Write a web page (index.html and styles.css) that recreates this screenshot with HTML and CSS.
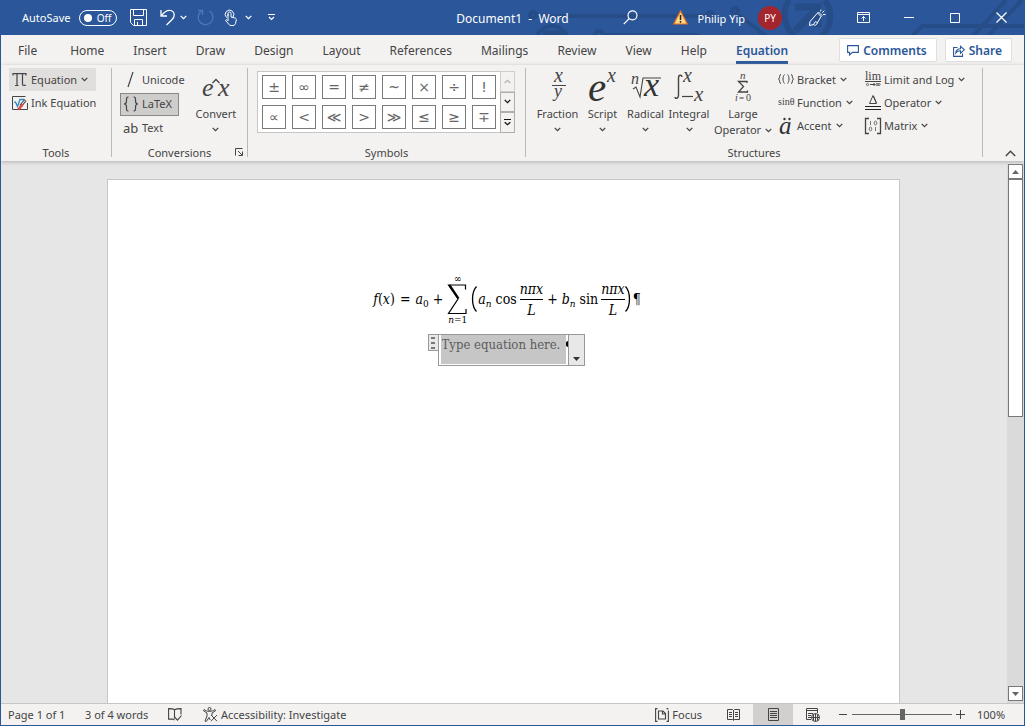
FILE: index.html
```html
<!DOCTYPE html>
<html lang="en">
<head>
<meta charset="utf-8">
<title>Document1 - Word</title>
<link rel="stylesheet" href="styles.css">
</head>
<body>
<svg class="defs" width="0" height="0" aria-hidden="true">
  <symbol id="chev" viewBox="0 0 7 5"><path d="M.7 .9 3.5 3.6 6.3 .9" fill="none" stroke="currentColor" stroke-width="1.3"/></symbol>
</svg>
<div class="window">
  <header class="titlebar">
    <svg class="circuit" width="500" height="35" viewBox="0 0 500 35" fill="none" stroke="#264d88" stroke-width="4" aria-hidden="true">
      <circle cx="9" cy="15" r="3"/><path d="M13 16H181"/><circle cx="186" cy="15" r="3"/>
      <circle cx="28" cy="42" r="16"/><path d="M19 33h18v6" stroke-width="5"/>
      <circle cx="75" cy="35" r="4"/><path d="M80 35H172l8 4"/>
      <circle cx="211" cy="11" r="3"/><path d="M215 15 242 36"/>
      <path d="M265 0a28 28 0 0 0 5 36M301 0a28 28 0 0 1-3 36" stroke-width="6"/>
      <path d="M271 7h23v20M293 9 271 31" stroke-width="7"/>
      <path d="M388 36 398 26H500M449 36 482 0M464 36 498 0"/>
    </svg>
    <div class="quick">
      <label class="autosave"><span>AutoSave</span><input type="checkbox" role="switch" class="hidden-check"><span class="switch"><i></i>Off</span></label>
      <button class="ic q-save" aria-label="Save"><svg width="17" height="17" viewBox="0 0 17 17" fill="none" stroke="#fff"><path d="M.5 .5h16v16H3.500l-3-3zM3.500 .5v6h10v-6M4.500 16.500v-6h8v6M7.500 16v-3"/></svg></button>
      <button class="ic q-undo" aria-label="Undo"><svg width="15" height="17" viewBox="0 0 15 17" fill="none" stroke="#fff" stroke-width="1.300"><path d="M1 1v6h6M1.300 6.700C4 3 7 1.300 9.500 1.300c3 0 4.700 2.200 4.700 4.700 0 2-1 3.500-2.300 4.800L6.500 16"/></svg></button>
      <button class="ic q-chev" aria-label="Undo options"><svg width="7" height="5"><use href="#chev"/></svg></button>
      <button class="ic q-redo" aria-label="Repeat"><svg width="17" height="17" viewBox="0 0 17 17" fill="none" stroke="#4d79b8" stroke-width="1.300"><path d="M12.500 2A7.400 7.400 0 1 1 4 2.500M1 1.500h4.500V6"/></svg></button>
      <button class="ic q-touch" aria-label="Touch mode"><svg width="14" height="17" viewBox="0 0 14 17" fill="none" stroke="#fff"><path d="M2.500 8.500a4.300 4.300 0 1 1 6.500-.5M4 7V4.500a1.500 1.500 0 0 1 3 0V8l4 1c1 .3 1.500 1 1.300 2l-.8 3.500-1.500 2H6L1.500 11.500c1-1.300 2-.7 2.500.3V5"/></svg></button>
      <button class="ic q-chev" aria-label="Touch options"><svg width="7" height="5"><use href="#chev"/></svg></button>
      <button class="ic q-more" aria-label="Customize toolbar"><svg width="7" height="7" viewBox="0 0 7 7" fill="none" stroke="#fff"><path d="M0 .5h7M1 3 3.500 5.500 6 3" stroke-width="1.200"/></svg></button>
    </div>
    <div class="title">Document1&nbsp; -&nbsp; Word</div>
    <div class="account">
      <button class="ic search" aria-label="Search"><svg width="15" height="15" viewBox="0 0 15 15" fill="none" stroke="#fff" stroke-width="1.200"><circle cx="9.500" cy="5.300" r="4.500"/><path d="M6.300 8.500.7 14.200"/></svg></button>
      <svg class="warn" width="15" height="15" viewBox="0 0 15 15"><path d="M7.500 1 14.300 14H.7z" fill="#ffd987" stroke="#e0701a" stroke-width="1.200"/><path d="M7.500 5v5M7.500 11v1.700" stroke="#222" stroke-width="1.500"/></svg>
      <span>Philip Yip</span>
      <span class="avatar">PY</span>
      <button class="ic win" aria-label="Drawing pen"><svg width="18" height="18" viewBox="0 0 18 18" fill="none" stroke="#fff"><path d="M2 12.500 9.500 4 13 7.500l-4.500 8c-1 1-2.500 1-3 0L1.500 16.500zM9.500 4l1-1 3.500 3.500-1 1M5.500 15.500l2-3 2 1.300M12.500 2.500l.5-2M14.300 3.700l2-2M15 5.500h2.500"/></svg></button>
      <button class="ic win" aria-label="Ribbon display options"><svg width="13" height="11" viewBox="0 0 13 11" fill="none" stroke="#fff"><path d="M.5 .5h12v10H.5zM.5 2.500h12M6.500 9V4.500M4.500 6.500l2-2 2 2"/></svg></button>
      <button class="ic win" aria-label="Minimize"><svg width="10" height="10"><path d="M0 4.500h10" stroke="#fff"/></svg></button>
      <button class="ic win" aria-label="Maximize"><svg width="10" height="10"><path d="M.5 .5h9v9h-9z" fill="none" stroke="#fff"/></svg></button>
      <button class="ic win" aria-label="Close"><svg width="11" height="11"><path d="M.5 .5l10 10M10.500 .5l-10 10" stroke="#fff" stroke-width="1.200"/></svg></button>
    </div>
  </header>

  <nav class="tabs">
    <button>File</button><button>Home</button><button>Insert</button><button>Draw</button><button>Design</button><button>Layout</button><button>References</button><button>Mailings</button><button>Review</button><button>View</button><button>Help</button><button class="active">Equation</button>
    <div class="tab-actions">
      <button><svg width="12" height="11" viewBox="0 0 12 11" fill="none" stroke="#2b579a" stroke-width="1.100"><path d="M.6 .6h10.800v6.800H5.500L2.500 10V7.400H.6z"/></svg>Comments</button>
      <button><svg width="12" height="12" viewBox="0 0 12 12" fill="none" stroke="#2b579a" stroke-width="1.100"><path d="M4.500 2.500H.6v8.900h8.900V8.500M2.800 8c.2-3 2-4.300 4.700-4.300V1.200l3.800 3.600-3.800 3.400V5.800C5.300 5.800 4 6.300 2.800 8z"/></svg>Share</button>
    </div>
  </nav>

  <section class="ribbon">
    <div class="group tools">
      <div class="stack rows23">
        <button class="sm hover"><svg width="16" height="16" viewBox="0 0 16 16" fill="none" stroke="#444" stroke-width="1.200"><path d="M1 3.500V1.600h13V3.500M5 2v11M3 13.500h3.500M10.500 2v10.500c0 1 2.500 1 3.500 .5"/></svg>Equation<svg class="cv" width="7" height="5"><use href="#chev"/></svg></button>
        <button class="sm"><svg width="16" height="16" viewBox="0 0 16 16" fill="none"><path d="M13.500 1.500H.5v13h15V8" stroke="#444"/><path d="M2 7.500l1.500-.5 2 4.500L8 4.500h4" stroke="#2b88c8" stroke-width="1.300"/><path d="M13.500 5 8.500 11" stroke="#555" stroke-width="3"/><path d="M13.200 5.300 8.800 10.700" stroke="#f3f2f1" stroke-width="1"/><path d="M10.500 9.500 6.500 14.500" stroke="#e0443e" stroke-width="2.500"/></svg>Ink Equation</button>
      </div>
      <h2>Tools</h2>
    </div>
    <div class="group conversions">
      <div class="cols">
        <div class="stack rows24">
          <button class="sm"><svg width="16" height="18" viewBox="0 0 16 18"><path d="M5 16 10 1" stroke="#444" stroke-width="1.200"/></svg>Unicode</button>
          <button class="sm pressed"><svg width="16" height="18" viewBox="0 0 16 18" fill="none" stroke="#444" stroke-width="1.200"><path d="M5.500 2C3 2 3.500 4 3.500 6S3 9 1 9c2 0 2.500 1 2.500 3s-.5 4 2 4M10.500 2c2.500 0 2 2 2 4s.5 3 2.500 3c-2 0-2.500 1-2.500 3s.5 4-2 4"/></svg>LaTeX</button>
          <button class="sm"><svg width="16" height="18" viewBox="0 0 16 18"><text x="0" y="14" class="sans" font-size="13">ab</text></svg>Text</button>
        </div>
        <button class="big"><svg width="32" height="32" viewBox="0 0 32 32"><text x="2" y="25" class="mi" font-size="26">e</text><text x="18" y="25" class="mi" font-size="26">x</text><path d="M12.500 12 16 8.500 19.500 12" fill="none" stroke="#444" stroke-width="1.300"/></svg>Convert<svg class="cv" width="7" height="5"><use href="#chev"/></svg></button>
      </div>
      <h2>Conversions</h2>
      <button class="launcher" aria-label="Conversion options"><svg width="9" height="9" viewBox="0 0 9 9" fill="none" stroke="#444"><path d="M.5 7.500V.5h7M3 3l4 4M7.500 3.500v4h-4"/></svg></button>
    </div>
    <div class="group symbols">
      <div class="gallery">
        <div class="cells">
          <button>±</button><button>∞</button><button>=</button><button>≠</button><button>~</button><button>×</button><button>÷</button><button>!</button>
          <button>∝</button><button>&lt;</button><button>≪</button><button>&gt;</button><button>≫</button><button>≤</button><button>≥</button><button>∓</button>
        </div>
        <div class="steps">
          <button class="off" aria-label="Previous row"><svg width="7" height="5"><path d="M.7 4 3.500 1.300 6.300 4" fill="none" stroke="#b0b0b0" stroke-width="1.200"/></svg></button>
          <button aria-label="Next row"><svg width="7" height="5"><use href="#chev"/></svg></button>
          <button aria-label="More symbols"><svg width="7" height="7" fill="none" stroke="currentColor"><path d="M0 .5h7M.7 3.200 3.500 5.800 6.300 3.200" stroke-width="1.200"/></svg></button>
        </div>
      </div>
      <h2>Symbols</h2>
    </div>
    <div class="group structures">
      <div class="structs">
        <button class="big"><svg width="32" height="32" viewBox="0 0 32 32"><text x="12" y="11" class="mi" font-size="20">x</text><path d="M10 14.500h14" stroke="#444"/><text x="12" y="26" class="mi" font-size="18">y</text></svg>Fraction<svg class="cv" width="7" height="5"><use href="#chev"/></svg></button>
        <button class="big"><svg width="32" height="32" viewBox="0 0 32 32"><text x="1" y="30" class="mi strong" font-size="41">e</text><text x="20" y="11" class="mi" font-size="20">x</text></svg>Script<svg class="cv" width="7" height="5"><use href="#chev"/></svg></button>
        <button class="big"><svg width="32" height="32" viewBox="0 0 32 32"><text x="1" y="13" class="mi" font-size="16">n</text><path d="M3 18l3-2 4 10 3-19H31" fill="none" stroke="#444" stroke-width="1.100"/><text x="14" y="25" class="mi strong" font-size="34">x</text></svg>Radical<svg class="cv" width="7" height="5"><use href="#chev"/></svg></button>
        <button class="big"><svg width="32" height="32" viewBox="0 0 32 32"><path d="M9 6c0-2-3.500-3-3.500 1v17c0 4-3.500 4-3.500 2" fill="none" stroke="#444" stroke-width="1.400"/><text x="10" y="11" class="mi" font-size="20">x</text><path d="M9 25.500h11" stroke="#444" stroke-width="1.200"/><text x="21" y="30" class="mi" font-size="21">x</text></svg>Integral<svg class="cv" width="7" height="5"><use href="#chev"/></svg></button>
        <button class="big"><svg width="32" height="32" viewBox="0 0 32 32"><text x="13" y="8" class="mi" font-size="11">n</text><path d="M20 12V10.500H11.500L16.500 15.500l-5 5.500H20.500V19.500" fill="none" stroke="#444" stroke-width="1.300"/><text x="8" y="30" class="mi" font-size="10">i</text><text x="12" y="30" class="mr" font-size="9">=</text><text x="19" y="30" class="mr" font-size="10">0</text></svg>Large<span>Operator<svg class="cv" width="7" height="5"><use href="#chev"/></svg></span></button>
        <div class="stack rows23">
          <button class="sm"><svg width="16" height="16" viewBox="0 0 16 16" fill="none" stroke="#444"><path d="M3 2.500C.8 2.500 2.500 6 .5 7c2 1 .3 4.500 2.500 4.500M6.500 2.500c-2 2-2 7 0 9M9.500 2.500c2 2 2 7 0 9M13 2.500c2.200 0 .5 3.500 2.500 4.500-2 1-.3 4.500-2.500 4.500"/></svg>Bracket<svg class="cv" width="7" height="5"><use href="#chev"/></svg></button>
          <button class="sm"><svg width="16" height="16" viewBox="0 0 16 16"><text x="0" y="10" class="mr" font-size="10">sinθ</text></svg>Function<svg class="cv" width="7" height="5"><use href="#chev"/></svg></button>
          <button class="sm"><svg width="16" height="18" viewBox="0 0 16 18"><text x="1" y="17" class="mi strong" font-size="25">a</text><circle cx="6.500" cy="2" r="1.200" fill="#333"/><circle cx="11.500" cy="2" r="1.200" fill="#333"/></svg>Accent<svg class="cv" width="7" height="5"><use href="#chev"/></svg></button>
        </div>
        <div class="stack rows23">
          <button class="sm"><svg width="16" height="16" viewBox="0 0 16 16"><text x="0" y="8" class="mr" font-size="12">lim</text><path d="M0 9.500h16" stroke="#444"/><path d="M5 12.500h5M8.500 11l1.500 1.500L8.500 14" fill="none" stroke="#444"/><circle cx="2.500" cy="12.500" r="1.100" fill="none" stroke="#666"/><circle cx="12" cy="12.500" r="1.100" fill="none" stroke="#666"/><circle cx="14" cy="12.500" r="1.100" fill="none" stroke="#666"/></svg>Limit and Log<svg class="cv" width="7" height="5"><use href="#chev"/></svg></button>
          <button class="sm"><svg width="16" height="16" viewBox="0 0 16 16" fill="none" stroke="#444"><path d="M4.500 8.500 8 .5l3.500 8zM8.500 1l3 7"/><path d="M0 11.500h16M0 14.500h16" stroke="#222"/></svg>Operator<svg class="cv" width="7" height="5"><use href="#chev"/></svg></button>
          <button class="sm"><svg width="16" height="16" viewBox="0 0 16 16" fill="none" stroke="#444"><path d="M4 .5H.5v15H4M12 .5h3.500v15H12" stroke-width="1.300"/><path d="M5.500 3v4M10.500 9v4" stroke="#777"/><ellipse cx="10.500" cy="5" rx="1.300" ry="2" stroke="#777"/><ellipse cx="5.500" cy="11" rx="1.300" ry="2" stroke="#777"/></svg>Matrix<svg class="cv" width="7" height="5"><use href="#chev"/></svg></button>
        </div>
      </div>
      <h2>Structures</h2>
    </div>
    <div class="ribbon-end"><button class="ic" aria-label="Collapse ribbon"><svg width="11" height="7"><path d="M.8 6 5.500 1.300 10.200 6" fill="none" stroke="#444" stroke-width="1.400"/></svg></button></div>
  </section>

  <main class="canvas">
    <div class="desk">
      <article class="page">
        <div class="formula">
          <span><i>f</i>(<i>x</i>)</span><span class="eq">=</span><span><i>a</i><sub>0</sub></span><span class="plus">+</span>
          <span class="sum"><small class="inf">∞</small><svg width="21" height="31" viewBox="0 0 21 31" role="img" aria-label="sum"><path d="M18.500 5.500V1H1.500L11 15 1.500 29.500H19V25" fill="none" stroke="#000" stroke-width="1.200"/><path d="M2.500 1 11.500 14.500" stroke="#000" stroke-width="2.200"/></svg><small><i>n</i>=1</small></span>
          <svg class="paren" width="6" height="26" viewBox="0 0 6 26"><path d="M5.500 .5C.2 6 .2 20 5.500 25.500" fill="none" stroke="#000" stroke-width="1.300"/></svg>
          <span><i>a</i><sub><i>n</i></sub></span><span class="fn">cos</span>
          <span class="frac"><i>nπx</i><i class="den">L</i></span><span class="plus">+</span>
          <span><i>b</i><sub><i>n</i></sub></span><span class="fn">sin</span>
          <span class="frac"><i>nπx</i><i class="den">L</i></span>
          <svg class="paren close" width="6" height="26" viewBox="0 0 6 26"><path d="M.5 .5C5.800 6 5.800 20 .5 25.500" fill="none" stroke="#000" stroke-width="1.300"/></svg><span class="pilcrow">¶</span>
        </div>
        <div class="editor">
          <button class="grip" aria-label="Move equation"><i></i><i></i><i></i></button>
          <div class="eqbox">
            <input value="Type equation here." aria-label="Equation"><span class="dot"></span>
            <button aria-label="Equation options"><svg width="7" height="4"><path d="M0 0h7L3.500 4z" fill="#333"/></svg></button>
          </div>
        </div>
      </article>
    </div>
    <div class="scroll">
      <button aria-label="Scroll up"><svg width="7" height="4"><path d="M0 4h7L3.500 0z" fill="#666"/></svg></button>
      <div class="track"><div class="thumb"></div></div>
      <button aria-label="Scroll down"><svg width="7" height="4"><path d="M0 0h7L3.500 4z" fill="#666"/></svg></button>
    </div>
  </main>

  <footer class="status">
    <span class="pageno">Page 1 of 1</span><span class="words">3 of 4 words</span>
    <button class="ic proof" aria-label="Proofing"><svg width="14" height="13" viewBox="0 0 14 13" fill="none" stroke="#444" stroke-width="1.100"><path d="M6.500 2v8.500M6.500 1.800C5.500 .8 3 .6 .6 .6v10.500h4.500l1.500 1M6.500 1.800C8 .8 10 .6 13 .6V6.500M6.500 9l3 3.200L13.500 7.500"/></svg></button>
    <button class="access"><svg width="15" height="15" viewBox="0 0 15 15" fill="none" stroke="#444"><circle cx="6.500" cy="2" r="1.500"/><path d="M1 2.500c3 2.500 8 2.500 11 0l.5 1.300L9 6v2.500M1 2.500.6 3.800 4 6v3l-2 5 1.300.5L6 10.500l1.200 2.500M8 8l6 6.200M14 8l-6 6.200"/></svg>Accessibility: Investigate</button>
    <span class="spacer"></span>
    <button class="focus"><svg width="14" height="14" viewBox="0 0 14 14" fill="none" stroke="#444" stroke-width="1.100"><path d="M2.500 .6H.6v12.800h1.900M11.500 .6h1.900M13.400 2.500v10.900h-1.900M3.500 3h4.500L10.500 5.500V11h-7zM7.500 3v3h3"/></svg>Focus</button>
    <button class="ic view" aria-label="Read mode"><svg width="13" height="12" viewBox="0 0 13 12" fill="none" stroke="#444"><path d="M.5 .5h5l1 1 1-1h5v10h-5l-1 1-1-1h-5zM6.500 1v10M2 3.500h3M2 5.500h3M2 7.500h3M8 3.500h3M8 5.500h3M8 7.500h3"/></svg></button>
    <button class="ic view on" aria-label="Print layout"><svg width="11" height="13" viewBox="0 0 11 13" fill="none" stroke="#444"><path d="M.5 .5h10v12H.5zM2 3.500h7M2 5.500h7M2 7.500h7M2 9.500h7"/></svg></button>
    <button class="ic view" aria-label="Web layout"><svg width="14" height="14" viewBox="0 0 14 14" fill="none" stroke="#444"><path d="M5 11.500H.5V.5h11V5M.5 2.500h11M2 5.500h5M2 7.500h3M2 9.500h3"/><circle cx="9.500" cy="9.500" r="4"/><path d="M5.500 9.500h8M9.500 5.500v8M7.500 6.500v6M11.500 6.500v6"/></svg></button>
    <button class="ic zoom-step" aria-label="Zoom out"><svg width="9" height="9"><path d="M0 4.500h8" stroke="#444"/></svg></button>
    <input class="zoom" type="range" min="0" max="100" value="50" aria-label="Zoom">
    <button class="ic zoom-step" aria-label="Zoom in"><svg width="9" height="9"><path d="M0 4.500h9M4.500 0v9" stroke="#444"/></svg></button>
    <span class="pct">100%</span>
  </footer>
</div>
</body>
</html>
```

FILE: styles.css
```css
* { box-sizing: border-box; }
body { margin: 0; font: 11px/16px "Noto Sans", "Open Sans", sans-serif; color: #444; }
button { font: inherit; color: inherit; background: none; border: 0; padding: 0; white-space: nowrap; }
svg { display: block; flex: none; overflow: visible; }
h2 { margin: 0; font: inherit; text-align: center; }
.defs { position: absolute; }
.window { height: 100vh; display: flex; flex-direction: column; border: 1px solid #2b579a; border-top: 0; background: #f3f2f1; overflow: hidden; }
.ic { display: flex; align-items: center; justify-content: center; }
.sans { font-family: "Noto Sans", sans-serif; fill: #444; }
.mi { font-family: "Liberation Serif", serif; font-style: italic; fill: #444; }
.mr { font-family: "Liberation Serif", serif; fill: #444; }
.strong { fill: #333; }

.titlebar { position: relative; height: 35px; flex: none; display: grid; grid-template-columns: 1fr auto 1fr; align-items: center; background: #2b579a; color: #fff; }
.titlebar > div { position: relative; }
.circuit { position: absolute; right: 0; top: 0; overflow: hidden; }
.quick { display: flex; align-items: center; padding-left: 21px; }
.autosave { display: flex; align-items: center; gap: 9px; }
.hidden-check { position: absolute; opacity: 0; }
.switch { display: flex; align-items: center; justify-content: space-between; width: 38px; height: 16px; padding: 0 5px 0 4px; border: 1px solid #fff; border-radius: 8px; font-size: 10px; }
.switch i { width: 8px; height: 8px; border-radius: 50%; background: #fff; }
.q-save { margin-left: 13px; }
.q-undo { margin-left: 13px; }
.q-chev { margin-left: 5px; }
.q-redo { margin-left: 10px; }
.q-touch { margin-left: 10px; }
.q-touch + .q-chev { margin-left: 7px; }
.q-more { margin-left: 16px; }
.title { font-size: 12px; padding-top: 2px; }
.account { display: flex; align-items: center; justify-content: flex-end; }
.search { margin-right: 35px; }
.warn { margin-right: 10px; }
.avatar { width: 24px; height: 24px; margin: 0 12px 0 10px; border-radius: 50%; background: #a4262c; text-align: center; font-size: 10px; line-height: 24px; }
.account > span:first-of-type { margin-right: 3px; padding-top: 2px; }
.win { width: 46px; height: 34px; }

.tabs { flex: none; height: 30px; display: flex; align-items: center; gap: 29px; padding: 0 12px 0 17px; font-size: 12px; }
.tabs > button { height: 28px; padding-top: 2px; }
.tabs > button:first-child { margin-right: 4px; }
.tabs > .active { font-weight: 600; color: #2b579a; border-bottom: 3px solid #2b579a; padding-top: 4px; }
.tab-actions { display: flex; gap: 8px; margin-left: auto; }
.tab-actions button { display: flex; align-items: center; gap: 4px; height: 24px; padding: 1px 9px 0 7px; border: 1px solid #e1dfdd; border-radius: 2px; background: #fff; color: #2b579a; font-weight: 600; }

.ribbon { flex: none; height: 96px; display: grid; grid-template-columns: 111px 136px 278px 457px 1fr; padding: 3px 0 4px; box-shadow: 0 1px 4px #b0b0b0; position: relative; }
.group { display: flex; flex-direction: column; justify-content: space-between; border-right: 1px solid #b9b9b9; position: relative; }
.group h2 { line-height: 16px; margin-bottom: -4px; }
.stack { display: grid; align-content: start; justify-items: start; }
.rows23 { grid-auto-rows: 23px; }
.rows24 { grid-auto-rows: 24px; align-items: center; }
.sm { display: flex; align-items: center; gap: 3px; height: 23px; padding: 0 3px; }
.sm .cv { margin-left: 1px; }
.tools .stack { padding-left: 8px; }
.tools .sm { width: 87px; }
.hover { background: #e1dfdd; }
.pressed { background: #cfcdcb; border: 1px solid #8a8886; padding: 0 6px 0 2px; }
.cols { display: flex; padding-left: 8px; }
.cols .big { margin-left: 8px; }
.big { display: flex; flex-direction: column; align-items: center; line-height: 16px; }
.big > svg:first-child { margin: 3px 0; }
.big > .cv { margin-top: 5px; }
.big span { display: flex; align-items: center; gap: 4px; }
.launcher { position: absolute; right: 3px; bottom: 0; }
.gallery { display: flex; width: 258px; height: 62px; margin: 3px 0 0 9px; border: 1px solid #c8c6c4; background: #fff; }
.cells { flex: 1; display: grid; grid-template-columns: repeat(8, 24px); grid-auto-rows: 24px; gap: 6px; padding: 3px 4px; }
.cells button { border: 1px solid #7a7a7a; font: 14px/20px "DejaVu Sans", sans-serif; color: #666; }
.steps { width: 15px; display: grid; grid-template-rows: repeat(3, 1fr); background: #f3f2f1; color: #111; margin: -1px; }
.steps button { display: grid; place-items: center; border: 1px solid #b0aeac; }
.steps .off { border-color: #d0cecc; }
.structs { display: grid; grid-template-columns: 47px 43px 43px 44px 64px 87px 1fr; padding-left: 8px; }
.ribbon-end { display: flex; align-items: flex-end; justify-content: flex-end; padding-right: 8px; }

.canvas { flex: 1; min-height: 0; display: flex; background: #e6e6e6; padding-top: 3px; }
.desk { flex: 1; display: flex; justify-content: center; overflow: hidden; padding: 15px 2px 0 0; }
.page { width: 793px; max-width: 100%; height: 1123px; background: #fff; border: 1px solid #c6c6c6; color: #000; }
.formula { display: flex; align-items: center; justify-content: center; height: 50px; margin-top: 94px; padding-left: 8px; font: 14px/18px "DejaVu Serif Condensed", "DejaVu Serif", serif; }
.formula sub { font-size: 10px; line-height: 0; vertical-align: -3px; }
.eq { padding: 0 5px; }
.plus { padding: 0 4px; }
.fn { padding: 0 3px 0 4px; }
.sum { display: flex; flex-direction: column; align-items: center; }
.sum small { font-size: 10px; line-height: 10px; }
.paren { margin: 0 1px 0 3px; }
.close { margin: 0 2px 0 0; }
.frac { display: flex; flex-direction: column; align-items: center; line-height: 20px; }
.frac .den { align-self: stretch; text-align: center; border-top: 1px solid #000; }
.editor { display: flex; align-items: flex-start; justify-content: center; margin-top: 10px; padding-left: 6px; }
.grip { display: grid; place-content: center; gap: 3px; width: 11px; height: 17px; margin-right: -1px; border: 1px solid #999; background: #e8e8e8; }
.grip i { width: 4px; height: 2px; background: #777; }
.eqbox { display: flex; height: 32px; width: 147px; border: 1px solid #999; padding-left: 2px; }
.eqbox input { flex: 1; min-width: 0; margin-bottom: 1px; border: 0; padding: 0 0 10px 1px; background: #c6c6c6; color: #5c5c5c; font: 13px/18px "DejaVu Serif Condensed", "DejaVu Serif", serif; }
.dot { width: 2px; height: 6px; margin-top: 6px; background: #000; border-radius: 2px 0 0 2px; }
.eqbox button { width: 16px; border-left: 1px solid #999; background: #e8e8e8; display: flex; align-items: flex-end; justify-content: center; padding-bottom: 4px; }
.scroll { width: 17px; flex: none; display: flex; flex-direction: column; padding: 0 1px 2px; background: #dadada; }
.scroll button { height: 15px; flex: none; display: grid; place-items: center; background: #fff; border: 1px solid #777; }
.track { flex: 1; }
.thumb { height: 47%; background: #fff; border: 1px solid #777; }

.status { flex: none; height: 22px; display: flex; align-items: center; border-top: 1px solid #c6c6c6; padding-left: 7px; }
.pageno { width: 77px; }
.words { width: 83px; }
.access { display: flex; align-items: center; gap: 3px; margin-left: 21px; }
.spacer { flex: 1; }
.focus { display: flex; align-items: center; gap: 3px; margin-right: 11px; }
.view { width: 40px; height: 21px; }
.view.on { background: #d2d0ce; }
.zoom-step { width: 17px; }
.zoom { appearance: none; width: 100px; height: 16px; margin: 0; background: linear-gradient(#666, #666) center / 100% 1px no-repeat; }
.zoom::-webkit-slider-thumb { appearance: none; width: 5px; height: 11px; background: #666; }
.zoom + .zoom-step { margin-right: 8px; }
.pct { width: 47px; }
.view + .zoom-step { margin-left: 2px; }
```
